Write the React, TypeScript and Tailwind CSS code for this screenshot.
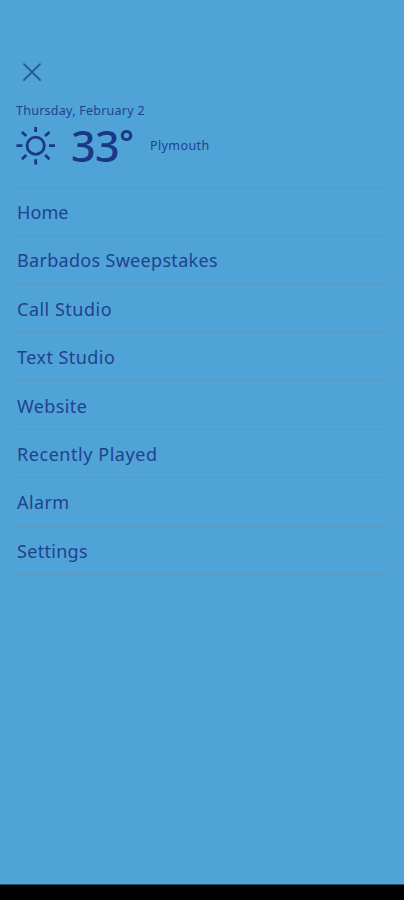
const items = [
  { label: "Home", tracking: "tracking-[0.1px]" },
  { label: "Barbados Sweepstakes", tracking: "tracking-[0.31px]" },
  { label: "Call Studio", tracking: "tracking-[0.5px]" },
  { label: "Text Studio", tracking: "tracking-[0.45px]" },
  { label: "Website", tracking: "tracking-[0.4px]" },
  { label: "Recently Played", tracking: "tracking-[0.55px]" },
  { label: "Alarm", tracking: "tracking-[0.4px]" },
  { label: "Settings", tracking: "tracking-[0.3px]" },
];

function CloseIcon() {
  return (
    <svg width="18" height="18" viewBox="0 0 18 18" fill="none" stroke="#285795" strokeWidth="1.8" strokeLinecap="round">
      <path d="M1 1.2 17 17M17 1.2 1 17" />
    </svg>
  );
}

function SunIcon() {
  return (
    <svg width="40" height="40" viewBox="0 0 40 40" fill="none" stroke="#1b3788" strokeWidth="2.8">
      <circle cx="19.7" cy="19.7" r="8.6" />
      <path d="M19.7 1V6M19.7 33.3V38.5M.5 19.7H6.5M33 19.7H39M5.9 6 10.3 10.1M29.1 29.1 33.5 33.2M5.9 33.2 10.3 29.1M29.1 10.1 33.5 6" />
    </svg>
  );
}

export default function App() {
  return (
    <div className="flex h-[900px] w-[404px] flex-col overflow-hidden bg-[#50a3d7] font-['Noto_Sans',sans-serif] font-[450] text-[#1f428f]">
      <header className="flex h-[187.9px] flex-col pl-4 pt-[63px]">
        <button className="ml-[7px] h-[18px] w-[18px]" aria-label="Close">
          <CloseIcon />
        </button>
        <p className="mt-[21px] h-[18px] whitespace-nowrap text-[12.5px] leading-[18px] tracking-[0.25px]">Thursday, February 2</p>
        <div className="mt-[6px] flex h-10 items-center">
          <SunIcon />
          <span className="ml-[15px] flex h-10 w-[79px] text-[43px] font-medium leading-[40px] tracking-[-0.5px] text-[#1b3788]">
            33
            <span className="text-[34px] font-semibold leading-[33px]">°</span>
          </span>
          <span className="text-[12.5px] leading-[18px] tracking-[0.4px]">Plymouth</span>
        </div>
      </header>
      <nav className="mr-[15px] ml-4">
        <div className="-mt-px h-px bg-[#5c99bd]" />
        {items.map(({ label, tracking }) => (
          <a key={label} className={`flex h-[48.4px] items-center whitespace-nowrap border-b border-[#5c99bd] pl-px pt-[1px] text-[18px] leading-6 ${tracking}`}>
            {label}
          </a>
        ))}
      </nav>
      <div className="mt-auto h-4 shrink-0 border-t border-[#24516b] bg-black" />
    </div>
  );
}
